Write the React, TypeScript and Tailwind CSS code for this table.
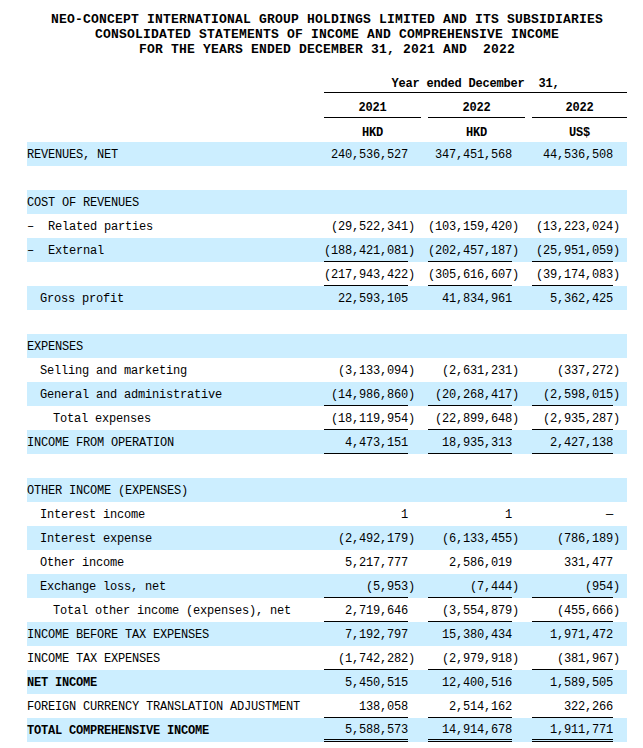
type Row = {
  label?: string;
  indent?: 0 | 1 | 2;
  bold?: boolean;
  values?: [string, string, string];
  line?: "single" | "double";
};

const rows: Row[] = [
  { label: "REVENUES, NET", values: ["240,536,527", "347,451,568", "44,536,508"] },
  {},
  { label: "COST OF REVENUES" },
  { label: "–  Related parties", values: ["(29,522,341)", "(103,159,420)", "(13,223,024)"] },
  { label: "–  External", values: ["(188,421,081)", "(202,457,187)", "(25,951,059)"], line: "single" },
  { values: ["(217,943,422)", "(305,616,607)", "(39,174,083)"], line: "single" },
  { label: "Gross profit", indent: 1, values: ["22,593,105", "41,834,961", "5,362,425"] },
  {},
  { label: "EXPENSES" },
  { label: "Selling and marketing", indent: 1, values: ["(3,133,094)", "(2,631,231)", "(337,272)"] },
  { label: "General and administrative", indent: 1, values: ["(14,986,860)", "(20,268,417)", "(2,598,015)"], line: "single" },
  { label: "Total expenses", indent: 2, values: ["(18,119,954)", "(22,899,648)", "(2,935,287)"], line: "single" },
  { label: "INCOME FROM OPERATION", values: ["4,473,151", "18,935,313", "2,427,138"], line: "single" },
  {},
  { label: "OTHER INCOME (EXPENSES)" },
  { label: "Interest income", indent: 1, values: ["1", "1", "—"] },
  { label: "Interest expense", indent: 1, values: ["(2,492,179)", "(6,133,455)", "(786,189)"] },
  { label: "Other income", indent: 1, values: ["5,217,777", "2,586,019", "331,477"] },
  { label: "Exchange loss, net", indent: 1, values: ["(5,953)", "(7,444)", "(954)"], line: "single" },
  { label: "Total other income (expenses), net", indent: 2, values: ["2,719,646", "(3,554,879)", "(455,666)"], line: "single" },
  { label: "INCOME BEFORE TAX EXPENSES", values: ["7,192,797", "15,380,434", "1,971,472"] },
  { label: "INCOME TAX EXPENSES", values: ["(1,742,282)", "(2,979,918)", "(381,967)"], line: "single" },
  { label: "NET INCOME", bold: true, values: ["5,450,515", "12,400,516", "1,589,505"] },
  { label: "FOREIGN CURRENCY TRANSLATION ADJUSTMENT", values: ["138,058", "2,514,162", "322,266"], line: "single" },
  { label: "TOTAL COMPREHENSIVE INCOME", bold: true, values: ["5,588,573", "14,914,678", "1,911,771"], line: "double" },
  { label: "Weighted average number of ordinary" },
];

const indents = ["pl-0", "pl-[13px]", "pl-[26px]"];
const cellWidths = ["w-[97px] pr-[13px]", "ml-[7px] w-[97px] pr-[13px]", "ml-[7px] w-[95px] pr-[14px]"];

function Amount({ value }: { value: string }) {
  // accounting style: closing paren hangs past the column edge
  if (value.endsWith(")")) {
    return (
      <span className="whitespace-pre">
        {value.slice(0, -1)}
        <span className="inline-block w-0">)</span>
      </span>
    );
  }
  return <span>{value}</span>;
}

function ValueCell({ value, line, width }: { value: string; line?: Row["line"]; width: string }) {
  const border =
    line === "double" ? "border-b-[3px] border-double border-black" : line === "single" ? "border-b border-black" : "";
  return (
    <div className={`${width} h-full`}>
      <div className={`h-full flex items-center justify-end pt-[2px] ${border}`}>
        <Amount value={value} />
      </div>
    </div>
  );
}

export default function App() {
  return (
    <div className="min-h-[748px] bg-white text-black font-['Liberation_Mono',monospace] text-[12px] tracking-[-0.2px]">
      <div className="ml-[27px] w-[600px] pt-[12px]">
        <div className="text-center text-[13px] font-bold tracking-[0.2px] leading-[15px] whitespace-pre">
          <div>NEO-CONCEPT INTERNATIONAL GROUP HOLDINGS LIMITED AND ITS SUBSIDIARIES</div>
          <div>CONSOLIDATED STATEMENTS OF INCOME AND COMPREHENSIVE INCOME</div>
          <div>FOR THE YEARS ENDED DECEMBER 31, 2021 AND  2022</div>
        </div>

        <div className="mt-[12px] pl-[297px] font-bold">
          <div className="h-[24px] flex items-center justify-center border-b border-black whitespace-pre pt-[6px]">
            Year ended December  31,
          </div>
          <div className="flex h-[25px]">
            <div className="w-[97px] border-b border-black flex items-center justify-center pt-[5px]">2021</div>
            <div className="ml-[7px] w-[97px] border-b border-black flex items-center justify-center pt-[5px]">2022</div>
            <div className="ml-[7px] w-[95px] border-b border-black flex items-center justify-center pt-[5px]">2022</div>
          </div>
          <div className="flex h-[24px] pt-[5px]">
            <div className="w-[97px] flex items-center justify-center">HKD</div>
            <div className="ml-[7px] w-[97px] flex items-center justify-center">HKD</div>
            <div className="ml-[7px] w-[95px] flex items-center justify-center">US$</div>
          </div>
        </div>

        <div>
          {rows.map((row, i) => (
            <div key={i} className={`flex h-6 ${i % 2 === 0 ? "bg-[#cceeff]" : "bg-white"}`}>
              <div
                className={`w-[297px] flex items-center pt-[2px] whitespace-pre ${indents[row.indent ?? 0]} ${
                  row.bold ? "font-bold" : ""
                }`}
              >
                {row.label ?? ""}
              </div>
              {row.values &&
                row.values.map((v, j) => <ValueCell key={j} value={v} line={row.line} width={cellWidths[j]} />)}
            </div>
          ))}
        </div>
      </div>
    </div>
  );
}
